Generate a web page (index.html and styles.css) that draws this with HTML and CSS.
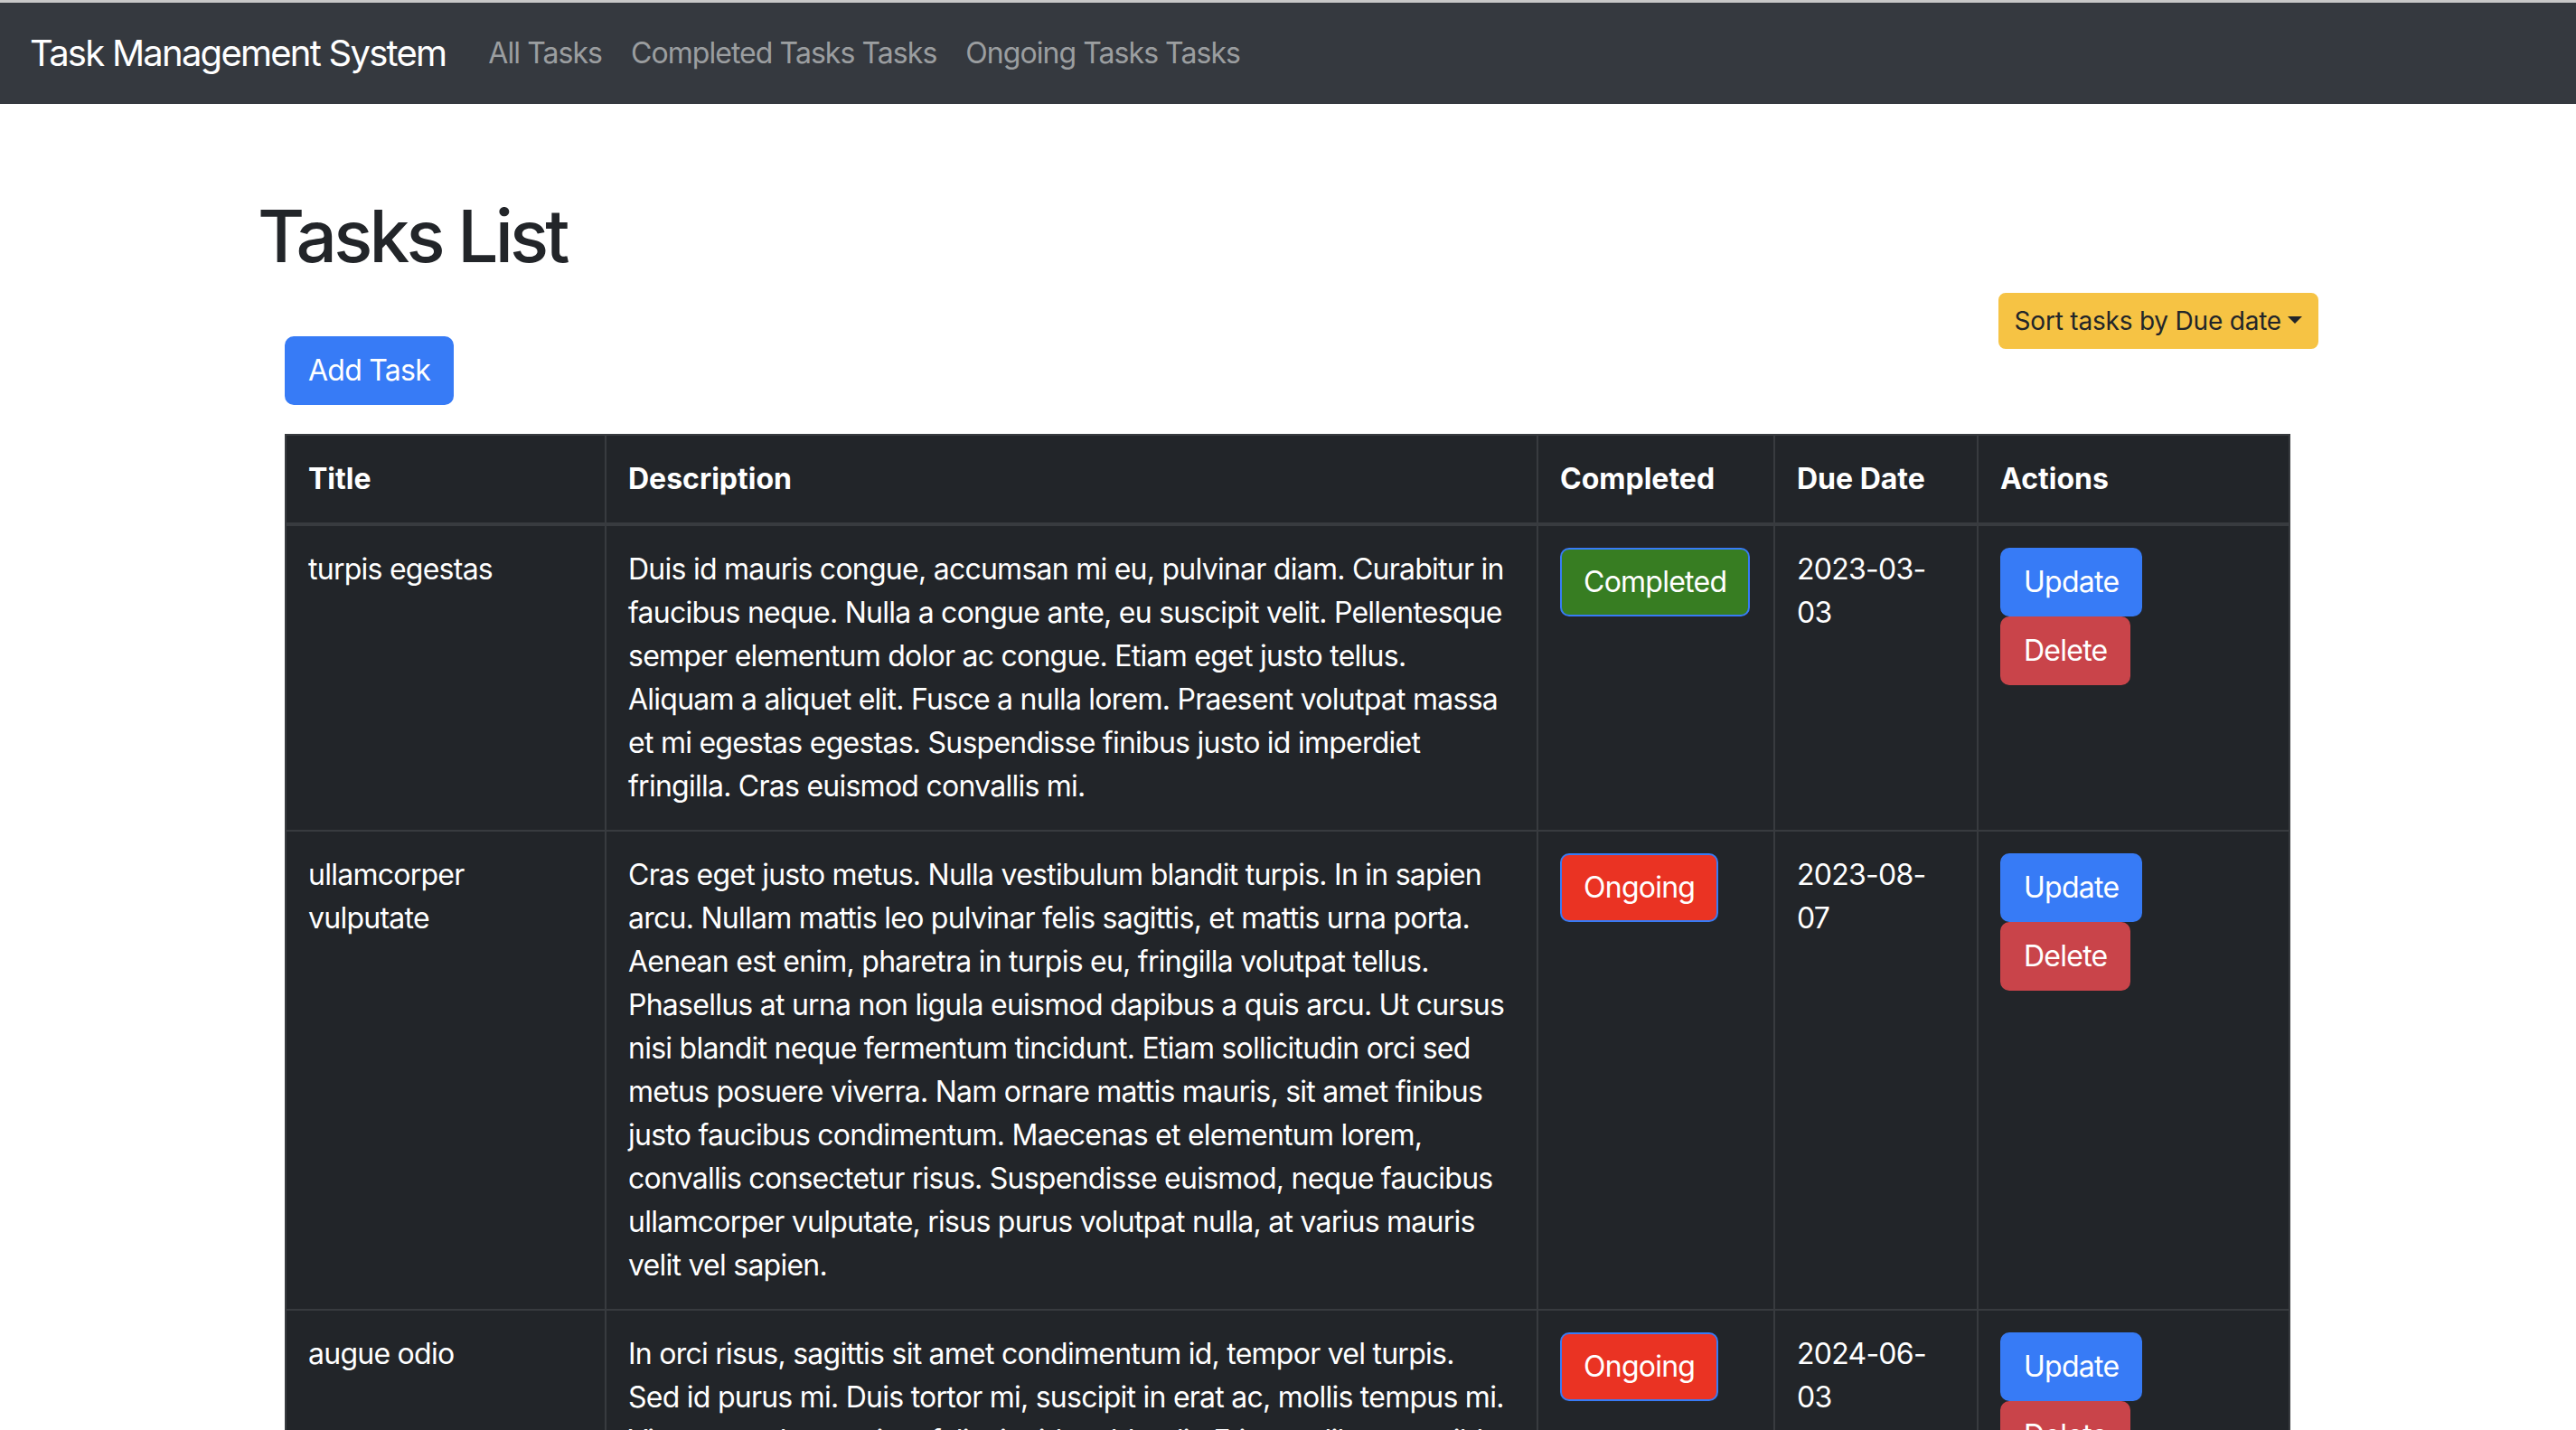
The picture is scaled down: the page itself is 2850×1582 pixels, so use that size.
FILE: index.html
```html
<!DOCTYPE html>
<html lang="en">
<head>
<meta charset="utf-8">
<title>Task Management System</title>
<link rel="stylesheet" href="styles.css">
</head>
<body>
<div class="chrome-strip"></div>
<nav class="navbar">
  <a class="brand" href="#">Task Management System</a>
  <ul class="nav-links">
    <li><a href="#">All Tasks</a></li>
    <li><a href="#">Completed Tasks Tasks</a></li>
    <li><a href="#">Ongoing Tasks Tasks</a></li>
  </ul>
</nav>
<main class="page">
  <h1 class="page-title">Tasks List</h1>
  <div class="toolbar">
    <button class="btn btn-sort" type="button">Sort tasks by Due date<span class="caret"></span></button>
    <button class="btn btn-primary btn-add" type="button">Add Task</button>
  </div>
  <table class="tasks">
    <colgroup>
      <col class="col-title">
      <col class="col-desc">
      <col class="col-status">
      <col class="col-due">
      <col class="col-actions">
    </colgroup>
    <thead>
      <tr>
        <th>Title</th>
        <th>Description</th>
        <th>Completed</th>
        <th>Due Date</th>
        <th>Actions</th>
      </tr>
    </thead>
    <tbody>
      <tr>
        <td>turpis egestas</td>
        <td>Duis id mauris congue, accumsan mi eu, pulvinar diam. Curabitur in faucibus neque. Nulla a congue ante, eu suscipit velit. Pellentesque semper elementum dolor ac congue. Etiam eget justo tellus. Aliquam a aliquet elit. Fusce a nulla lorem. Praesent volutpat massa et mi egestas egestas. Suspendisse finibus justo id imperdiet fringilla. Cras euismod convallis mi.</td>
        <td><button class="btn btn-status btn-completed" type="button">Completed</button></td>
        <td>2023-03-03</td>
        <td><div class="actions"><button class="btn btn-primary" type="button">Update</button><button class="btn btn-danger" type="button">Delete</button></div></td>
      </tr>
      <tr>
        <td>ullamcorper vulputate</td>
        <td>Cras eget justo metus. Nulla vestibulum blandit turpis. In in sapien arcu. Nullam mattis leo pulvinar felis sagittis, et mattis urna porta. Aenean est enim, pharetra in turpis eu, fringilla volutpat tellus. Phasellus at urna non ligula euismod dapibus a quis arcu. Ut cursus nisi blandit neque fermentum tincidunt. Etiam sollicitudin orci sed metus posuere viverra. Nam ornare mattis mauris, sit amet finibus justo faucibus condimentum. Maecenas et elementum lorem, convallis consectetur risus. Suspendisse euismod, neque faucibus ullamcorper vulputate, risus purus volutpat nulla, at varius mauris velit vel sapien.</td>
        <td><button class="btn btn-status btn-ongoing" type="button">Ongoing</button></td>
        <td>2023-08-07</td>
        <td><div class="actions"><button class="btn btn-primary" type="button">Update</button><button class="btn btn-danger" type="button">Delete</button></div></td>
      </tr>
      <tr>
        <td>augue odio</td>
        <td>In orci risus, sagittis sit amet condimentum id, tempor vel turpis.<br>Sed id purus mi. Duis tortor mi, suscipit in erat ac, mollis tempus mi. Vivamus at lorem vitae felis tincidunt blandit. Etiam at libero et nibh ultricies tempor.</td>
        <td><button class="btn btn-status btn-ongoing" type="button">Ongoing</button></td>
        <td>2024-06-03</td>
        <td><div class="actions"><button class="btn btn-primary" type="button">Update</button><button class="btn btn-danger" type="button">Delete</button></div></td>
      </tr>
    </tbody>
  </table>
</main>
</body>
</html>
```
FILE: styles.css
```css
* { box-sizing: border-box; }

html, body {
  margin: 0;
  padding: 0;
  background: #ffffff;
}

body {
  font-family: "Inter", "Liberation Sans", sans-serif;
  font-size: 32px;
  line-height: 48px;
  letter-spacing: -0.75px;
  color: #222529;
}

.chrome-strip {
  height: 3px;
  background: #c8c8c8;
}

.navbar {
  height: 112px;
  background: #35393f;
  display: flex;
  align-items: center;
  padding-left: 33px;
}

.brand {
  font-size: 40px;
  line-height: 60px;
  letter-spacing: -1.75px;
  color: #ffffff;
  text-decoration: none;
  margin-right: 31px;
}

.nav-links {
  list-style: none;
  margin: 0;
  padding: 0;
  display: flex;
}

.nav-links a {
  display: block;
  padding: 0 16px;
  color: #9b9ea0;
  text-decoration: none;
  font-size: 32px;
  line-height: 48px;
  letter-spacing: -0.95px;
}

.page {
  margin-left: 287px;
  width: 2278px;
  padding-top: 98px;
}

.page-title {
  margin: 0 0 15px -2px;
  font-size: 80px;
  line-height: 96px;
  font-weight: 500;
  letter-spacing: -3.8px;
  color: #222529;
}

.toolbar {
  display: grid;
  grid-template-columns: 1fr auto;
  grid-template-rows: 48px 76px;
}

.btn {
  font-family: inherit;
  font-size: 32px;
  line-height: 48px;
  letter-spacing: -0.75px;
  padding: 12px 24px;
  border: 2px solid transparent;
  border-radius: 10px;
  color: #ffffff;
  cursor: pointer;
  display: inline-block;
}

.btn-primary {
  background: #377bf6;
  border-color: #377bf6;
}

.btn-danger {
  background: #c9444a;
  border-color: #c9444a;
}

.btn-sort {
  grid-column: 2;
  grid-row: 1 / span 2;
  align-self: start;
  background: #f6c344;
  border-color: #f6c344;
  color: #222529;
  font-size: 28px;
  line-height: 42px;
  letter-spacing: -0.2px;
  padding: 8px 16px;
  border-radius: 8px;
}

.caret {
  display: inline-block;
  margin-left: 7px;
  vertical-align: 7px;
  border-top: 8px solid #222529;
  border-left: 8px solid transparent;
  border-right: 8px solid transparent;
}

.btn-add {
  grid-column: 1;
  grid-row: 2;
  justify-self: start;
  margin-left: 28px;
}

.tasks {
  margin: 32px 0 0 28px;
  width: 2219px;
  table-layout: fixed;
  border-collapse: separate;
  border-spacing: 0;
  background: #222529;
  color: #ffffff;
  border-top: 2px solid #383b3f;
  border-left: 2px solid #383b3f;
}

.col-title { width: 354px; }
.col-desc { width: 1031px; }
.col-status { width: 262px; }
.col-due { width: 225px; }
.col-actions { width: 345px; }

.tasks th,
.tasks td {
  padding: 24px;
  text-align: left;
  vertical-align: top;
  border-right: 2px solid #383b3f;
  border-bottom: 2px solid #383b3f;
}

.tasks th {
  font-weight: 700;
  letter-spacing: 0;
  border-bottom-width: 4px;
}

.btn-status {
  background: #377d22;
  border-color: #377bf6;
}

.btn-ongoing {
  background: #ea3323;
}

.actions {
  display: flex;
  flex-direction: column;
  align-items: flex-start;
}
```
